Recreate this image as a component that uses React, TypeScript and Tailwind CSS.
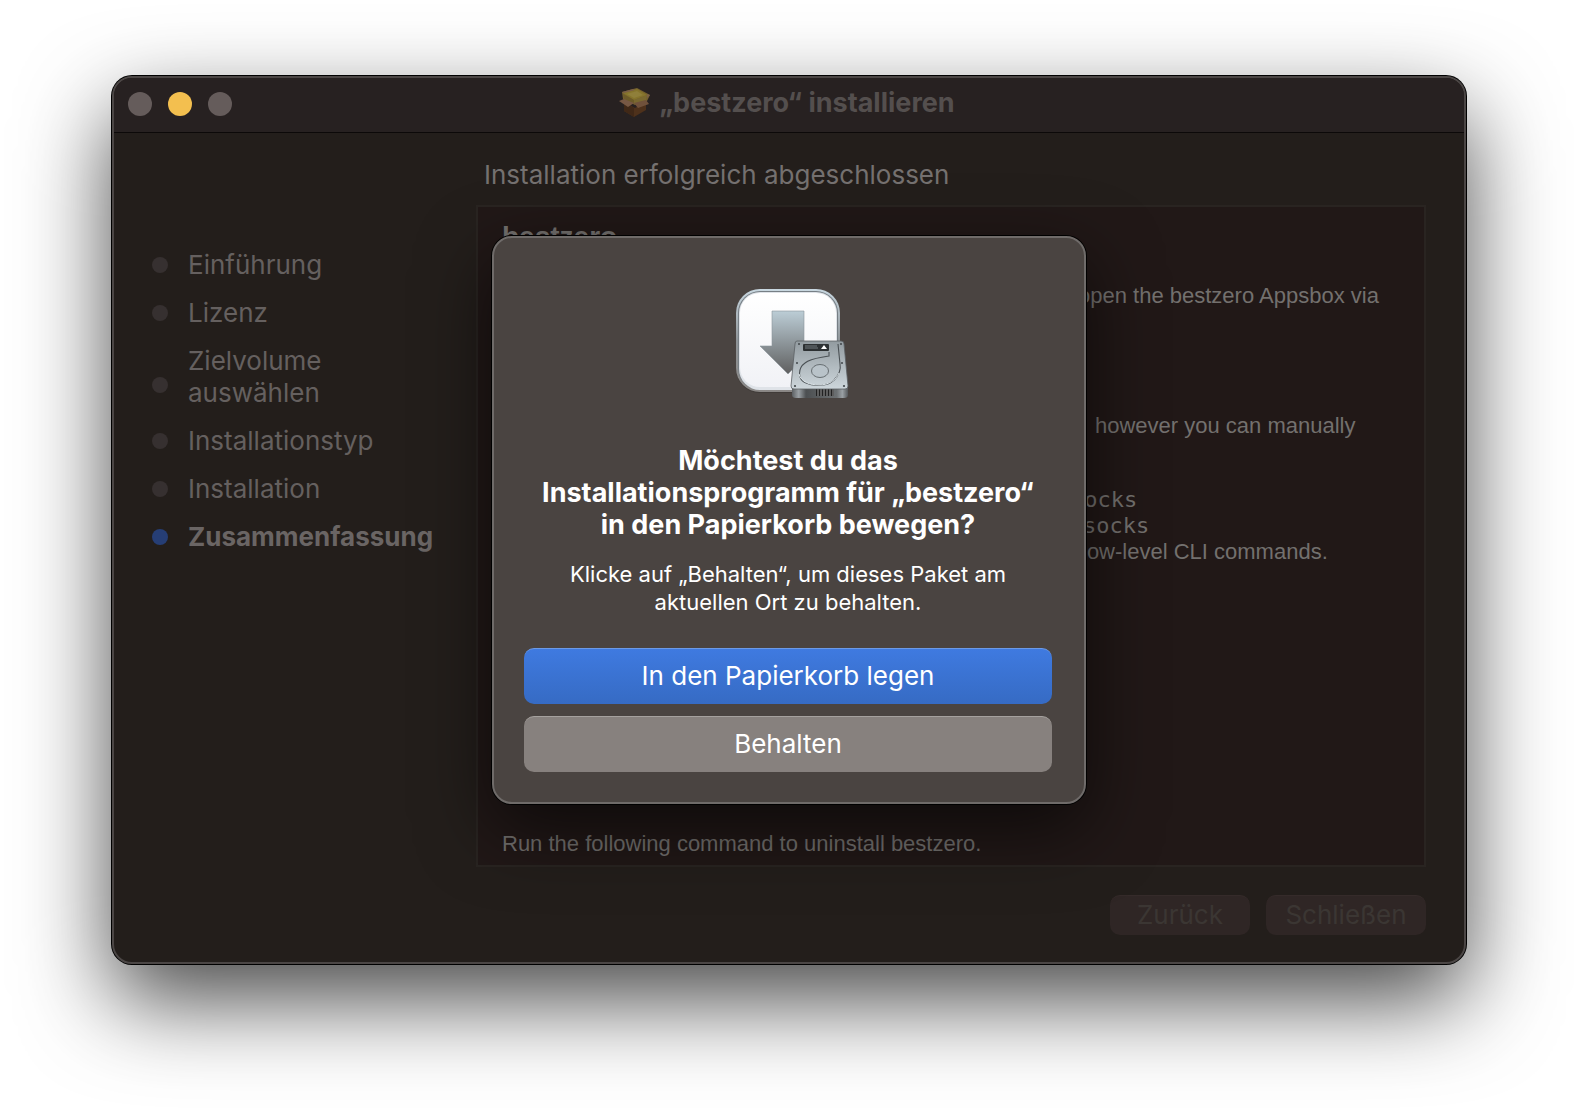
import { useState } from 'react';

interface Step {
  label: string;
  twoLines?: boolean;
}

const steps: Step[] = [
  { label: 'Einführung' },
  { label: 'Lizenz' },
  { label: 'Zielvolume auswählen', twoLines: true },
  { label: 'Installationstyp' },
  { label: 'Installation' },
  { label: 'Zusammenfassung' },
];

function PackageIcon() {
  return (
    <svg width="32" height="30" viewBox="0 0 32 30" aria-hidden="true">
      <path d="M5 14 L16 20 L27 13 V22 L15 29 L5 23 Z" fill="#4e311b" />
      <path d="M5 14 L15 20 V29 L5 23 Z" fill="#402817" />
      <path d="M3 4 L14 1 L18 0 L31 7 L28 13 L16 17 L4 11 Z" fill="#75612d" />
      <path d="M4 5 L18 1 L28 7 L15 12 Z" fill="#85742c" />
      <path d="M8 6 L18 3 L24 7 L15 10 Z" fill="#8f7f3a" />
      <path d="M4 6 L15 12 V16 L5 11 Z" fill="#6c5a28" />
      <path d="M15 12 L28 7 L27 12 L15 16 Z" fill="#7a6930" />
      <path d="M5 5 L3 4 L14 1 L16 2 Z" fill="#7a5e48" />
      <path d="M28 6 L31 7 L28 10 Z" fill="#7a5e48" />
      <path d="M5 11 L0 13 L9 19 L15 15 Z" fill="#775844" />
      <path d="M15 15 L27 12 L30 16 L19 20 Z" fill="#70513b" />
    </svg>
  );
}

function InstallerIcon() {
  return (
    <svg width="128" height="128" viewBox="0 0 128 128" aria-hidden="true">
      <defs>
        <linearGradient id="rim" x1="0" y1="0" x2="0" y2="1">
          <stop offset="0" stopColor="#c9d8e1" />
          <stop offset="0.5" stopColor="#8f9599" />
          <stop offset="1" stopColor="#8a8785" />
        </linearGradient>
        <linearGradient id="tile" x1="0" y1="0" x2="0" y2="1">
          <stop offset="0" stopColor="#ffffff" />
          <stop offset="1" stopColor="#f1f2f6" />
        </linearGradient>
        <linearGradient id="arrow" x1="0" y1="0" x2="0" y2="1">
          <stop offset="0" stopColor="#bccdd6" />
          <stop offset="1" stopColor="#5f5f5f" />
        </linearGradient>
        <linearGradient id="drive" x1="0" y1="0" x2="0" y2="1">
          <stop offset="0" stopColor="#929ba0" />
          <stop offset="1" stopColor="#cdd6db" />
        </linearGradient>
        <linearGradient id="base" x1="0" y1="0" x2="1" y2="0">
          <stop offset="0" stopColor="#5c6063" />
          <stop offset="0.12" stopColor="#9aa0a4" />
          <stop offset="0.25" stopColor="#4c4f51" />
          <stop offset="0.8" stopColor="#6c7072" />
          <stop offset="0.9" stopColor="#9aa0a4" />
          <stop offset="1" stopColor="#55585a" />
        </linearGradient>
      </defs>
      <rect x="12" y="13" width="104" height="103" rx="24" fill="#35312f" opacity="0.5" />
      <rect x="12" y="12" width="104" height="103" rx="24" fill="url(#rim)" />
      <rect x="14" y="14" width="100" height="99" rx="22" fill="#777f85" />
      <rect x="15" y="15" width="98" height="98" rx="21" fill="#dfe3e8" />
      <rect x="16" y="16" width="96" height="94" rx="20" fill="url(#tile)" />
      <path d="M48 34 H80 V69 H92 L64 97 L36 69 H48 Z" fill="url(#arrow)" stroke="#8b969c" strokeWidth="0.6" />
      <path d="M68 110 H124 V118 Q124 121 120 121 H72 Q68 121 68 118 Z" fill="url(#base)" />
      <rect x="92" y="111" width="18" height="8" fill="#222" />
      <path d="M94 112 V119 M97 112 V119 M100 112 V119 M103 112 V119 M106 112 V119 M109 112 V119" stroke="#999" strokeWidth="1" />
      <path
        d="M73 64 H117 Q120 64 120 67 L124 109 Q124 112 121 112 H70 Q67 112 67 109 L71 67 Q71 64 73 64 Z"
        fill="url(#drive)"
        stroke="#5b6063"
        strokeWidth="0.8"
      />
      <path
        d="M105 75 V79 C96 81 87 81 81 86 C74 91 73 102 82 106 C90 110 104 109 110 103 C115 98 117 92 116 87 L114 67"
        fill="none"
        stroke="#4b5155"
        strokeWidth="1.1"
      />
      <path d="M75 97 C77 105 86 108 95 108 C105 108 112 103 115 96" fill="none" stroke="#dfe7eb" strokeWidth="1" />
      <ellipse cx="96" cy="94" rx="8.5" ry="6.5" fill="#b9c3c9" stroke="#5d6468" strokeWidth="0.9" />
      <rect x="79" y="67" width="26" height="7" rx="1" fill="#2c3032" />
      <path d="M81 69 H93 M81 71 H94" stroke="#7c8488" strokeWidth="0.9" />
      <path d="M100 68 L103 72 H97 Z" fill="#fff" />
      <g fill="#40464a">
        <circle cx="75" cy="67" r="1" />
        <circle cx="117" cy="67" r="1" />
        <circle cx="73" cy="86" r="1" />
        <circle cx="118" cy="86" r="1" />
        <circle cx="71" cy="109" r="1.1" />
        <circle cx="120" cy="109" r="1.1" />
      </g>
    </svg>
  );
}

function TitleBar() {
  return (
    <header className="relative flex h-[55px] items-center justify-center rounded-t-[18px] border-b border-[#0c0909] bg-[#272121] pb-1">
      <div className="absolute top-3.5 left-3.5 flex gap-4">
        <button aria-label="Schließen" className="size-6 rounded-full bg-[#655c5b]" />
        <button aria-label="Minimieren" className="size-6 rounded-full bg-[#f3bf4f]" />
        <button aria-label="Vergrößern" className="size-6 rounded-full bg-[#655c5b]" />
      </div>
      <h1 className="flex items-center gap-2 pr-1 text-[27px] font-bold text-[#544f4e]">
        <PackageIcon />
        „bestzero“ installieren
      </h1>
    </header>
  );
}

function Sidebar({ current }: { current: string }) {
  return (
    <nav className="w-[362px] shrink-0 pt-[116px] pl-[38px]">
      <ul className="flex flex-col gap-4">
        {steps.map((step) => {
          const active = step.label === current;
          return (
            <li
              key={step.label}
              className={`flex gap-5 ${active ? 'font-bold text-[#6a6564]' : 'text-[#65605f]'}`}
            >
              <span
                className={`size-4 shrink-0 rounded-full ${step.twoLines ? 'mt-8' : 'mt-2'} ${
                  active ? 'bg-[#263e75]' : 'bg-[#363030]'
                }`}
              />
              <span className={step.twoLines ? 'w-40' : ''}>{step.label}</span>
            </li>
          );
        })}
      </ul>
    </nav>
  );
}

function Summary() {
  return (
    <section className="flex h-[662px] flex-col overflow-hidden border-2 border-[#292421] bg-[#211817] px-6 pt-3.5 pb-2 font-['Liberation_Sans',Arial,sans-serif] text-[22px] leading-[26px] text-[#73706e]">
      <h3 className="text-[28px] leading-8 font-bold">bestzero</h3>
      <p className="pt-[30px] pl-[576px] whitespace-nowrap">open the bestzero Appsbox via</p>
      <p className="pt-[104px] pl-[593px] whitespace-nowrap">however you can manually</p>
      <div className="pt-12 pl-[569px] font-['DejaVu_Sans_Mono',monospace]">
        <p>socks</p>
        <p className="pl-3">socks</p>
      </div>
      <p className="pl-[580px] whitespace-nowrap">low-level CLI commands.</p>
      <p className="mt-auto">Run the following command to uninstall bestzero.</p>
    </section>
  );
}

function TrashDialog({ onClose }: { onClose: () => void }) {
  return (
    <div className="absolute inset-x-0 top-[158px] flex justify-center">
      <div
        role="dialog"
        aria-labelledby="dialog-title"
        className="w-[594px] rounded-[20px] border-2 border-[#6f6b69] bg-[#4a4441] pt-[39px] pr-8 pb-[30px] pl-[30px] text-center text-white shadow-[0_0_0_1px_#000,0_24px_72px_rgba(0,0,0,0.6)]"
      >
        <div className="flex justify-center">
          <InstallerIcon />
        </div>
        <h2 id="dialog-title" className="mt-10 text-[27px] font-bold">
          Möchtest du das
          <br />
          Installationsprogramm für „bestzero“
          <br />
          in den Papierkorb bewegen?
        </h2>
        <p className="mt-[19px] text-[22px] leading-7">
          Klicke auf „Behalten“, um dieses Paket am
          <br />
          aktuellen Ort zu behalten.
        </p>
        <div className="mt-8 flex flex-col gap-3">
          <button
            onClick={onClose}
            className="h-14 rounded-[10px] border-t border-[#6c9ae6] bg-linear-to-b from-[#3f7ae0] to-[#366bc4] pb-0.5"
          >
            In den Papierkorb legen
          </button>
          <button onClick={onClose} className="h-14 rounded-[10px] border-t border-[#a5a19e] bg-[#87817e] pb-0.5">
            Behalten
          </button>
        </div>
      </div>
    </div>
  );
}

export default function App() {
  const [open, setOpen] = useState(true);

  return (
    <div className="min-h-screen bg-white px-28 pt-[76px] pb-[147px] font-['Inter',sans-serif] text-[26px] leading-8">
      <div className="relative rounded-[20px] border-2 border-[#4b4645] bg-[#231e1b] shadow-[0_0_0_1px_#000,0_36px_90px_rgba(0,0,0,0.72)]">
        <TitleBar />
        <div className="flex pr-[38px] pb-[27px]">
          <Sidebar current="Zusammenfassung" />
          <main className="min-w-0 flex-1">
            <h2 className="pt-[26px] pb-3.5 pl-2 text-[#757170]">Installation erfolgreich abgeschlossen</h2>
            <Summary />
            <div className="mt-7 flex justify-end gap-4 text-[#3b3633]">
              <button disabled className="h-10 w-[140px] rounded-[10px] border-t border-[#352b2a] bg-[#2f2625] pb-0.5">
                Zurück
              </button>
              <button disabled className="h-10 w-40 rounded-[10px] border-t border-[#352b2a] bg-[#2f2625] pb-0.5">
                Schließen
              </button>
            </div>
          </main>
        </div>
        {open && <TrashDialog onClose={() => setOpen(false)} />}
      </div>
    </div>
  );
}
